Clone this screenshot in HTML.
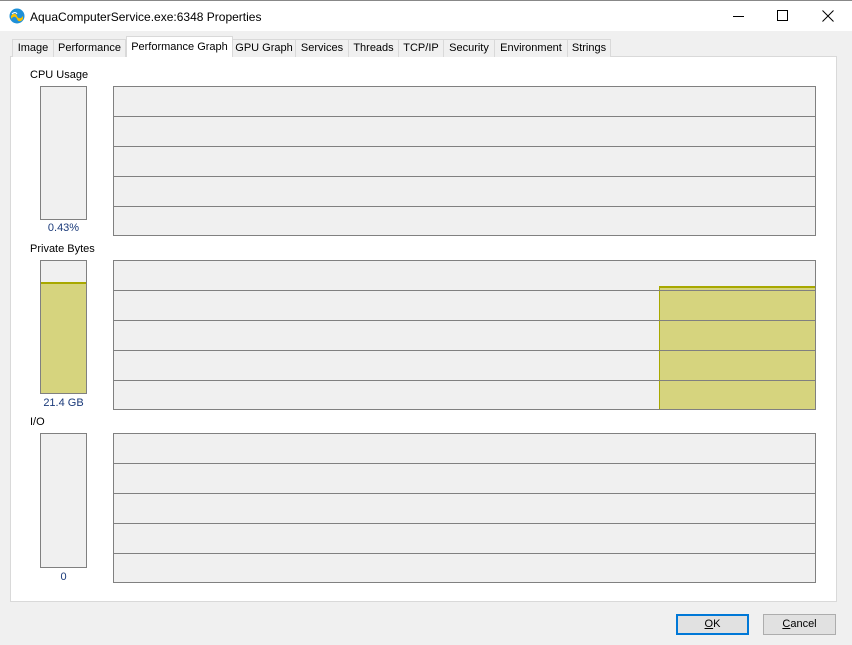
<!DOCTYPE html>
<html><head><style>
*{margin:0;padding:0;box-sizing:border-box}
body{width:852px;height:645px;background:#f0f0f0;font-family:"Liberation Sans",sans-serif;font-size:11px;position:relative;overflow:hidden;color:#000}
.a{position:absolute}
.tb{left:0;top:0;width:852px;height:31px;background:#fff;border-top:1px solid #888}
.tab{position:absolute;top:39px;height:18px;border:1px solid #d9d9d9;border-bottom:none;background:#f0f0f0;text-align:center;line-height:17px;font-size:11px}
.sel{top:36px;height:21px;background:#fff;line-height:20px;z-index:2}
.panel{left:10px;top:56px;width:827px;height:546px;background:#fff;border:1px solid #d9d9d9}
.bar{background:#f0f0f0;border:1px solid #808080;width:47px}
.g{background:#f0f0f0;border:1px solid #808080;width:703px;height:150px}
.l{position:absolute;left:0;right:0;height:1px;background:#808080}
.lbl{font-size:11px}
.val{width:47px;text-align:center;color:#1a3a7a;font-size:11px}
.btn{top:614px;width:73px;height:21px;border:1px solid #adadad;background:#e1e1e1;text-align:center;line-height:19px;font-size:11px}
</style></head><body>
<div class="a tb">
<svg class="a" style="left:9px;top:7px" width="16" height="16" viewBox="0 0 16 16"><circle cx="8" cy="8" r="7.5" fill="#1e90d8"/><path d="M2 8c2-3 5-3 6 0s4 3 6 0v3c-2 3-5 3-6 0s-4-3-6 0z" fill="#f5c000"/><path d="M3 6c2-2 4-2 5 0" stroke="#fff" fill="none"/></svg>
<div class="a" style="left:30px;top:9px;font-size:12px">AquaComputerService.exe:6348 Properties</div>
<div class="a" style="left:733px;top:15px;width:11px;height:1px;background:#000"></div>
<div class="a" style="left:777px;top:9px;width:11px;height:11px;border:1px solid #000"></div>
<svg class="a" style="left:822px;top:9px" width="12" height="12"><path d="M0.5 0.5L11.5 11.5M11.5 0.5L0.5 11.5" stroke="#000"/></svg>
</div>
<div class="a panel"></div>
<div class="tab" style="left:12px;width:42px">Image</div>
<div class="tab" style="left:53px;width:73px">Performance</div>
<div class="tab sel" style="left:126px;width:107px">Performance Graph</div>
<div class="tab" style="left:232px;width:64px">GPU Graph</div>
<div class="tab" style="left:295px;width:54px">Services</div>
<div class="tab" style="left:348px;width:51px">Threads</div>
<div class="tab" style="left:398px;width:46px">TCP/IP</div>
<div class="tab" style="left:443px;width:52px">Security</div>
<div class="tab" style="left:494px;width:74px">Environment</div>
<div class="tab" style="left:567px;width:44px">Strings</div>

<div class="a lbl" style="left:30px;top:69px">CPU Usage</div>
<div class="a bar" style="left:40px;top:86px;height:134px"></div>
<div class="a val" style="left:40px;top:222px">0.43%</div>
<div class="a g" style="left:113px;top:86px"><div class="l" style="top:29px"></div><div class="l" style="top:59px"></div><div class="l" style="top:89px"></div><div class="l" style="top:119px"></div></div>

<div class="a lbl" style="left:30px;top:243px">Private Bytes</div>
<div class="a bar" style="left:40px;top:260px;height:134px"><div class="a" style="left:0;right:0;top:21px;bottom:0;background:#d6d47e;border-top:2px solid #a8a800"></div></div>
<div class="a val" style="left:40px;top:397px">21.4 GB</div>
<div class="a g" style="left:113px;top:260px"><div class="a" style="left:545px;right:0;top:25px;bottom:0;background:#d6d47e;border-top:2px solid #a8a800;border-left:1px solid #a8a800"></div><div class="l" style="top:29px"></div><div class="l" style="top:59px"></div><div class="l" style="top:89px"></div><div class="l" style="top:119px"></div></div>

<div class="a lbl" style="left:30px;top:416px">I/O</div>
<div class="a bar" style="left:40px;top:433px;height:135px"></div>
<div class="a val" style="left:40px;top:571px">0</div>
<div class="a g" style="left:113px;top:433px"><div class="l" style="top:29px"></div><div class="l" style="top:59px"></div><div class="l" style="top:89px"></div><div class="l" style="top:119px"></div></div>

<div class="a btn" style="left:676px;border:2px solid #0078d7;line-height:17px"><u>O</u>K</div>
<div class="a btn" style="left:763px"><u>C</u>ancel</div>
</body></html>
